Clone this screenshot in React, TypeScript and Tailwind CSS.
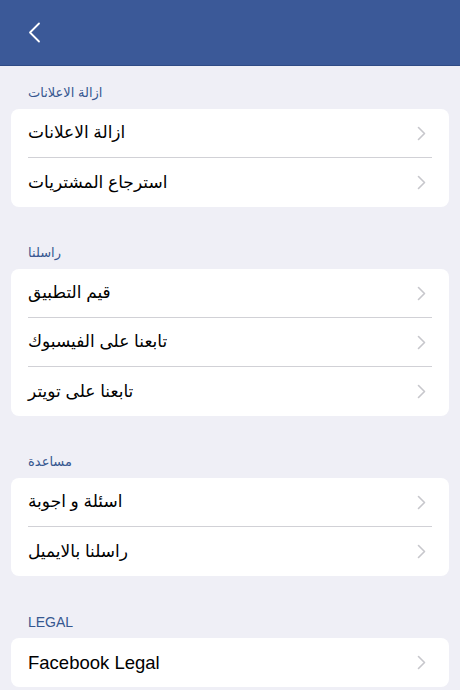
import React from "react";

const sections = [
  { title: "ازالة الاعلانات", items: ["ازالة الاعلانات", "استرجاع المشتريات"] },
  { title: "راسلنا", items: ["قيم التطبيق", "تابعنا على الفيسبوك", "تابعنا على تويتر"] },
  { title: "مساعدة", items: ["اسئلة و اجوبة", "راسلنا بالايميل"] },
  { title: "LEGAL", items: ["Facebook Legal"] },
];

const Chevron = () => (
  <svg width="9" height="15" viewBox="0 0 9 15" fill="none" stroke="#c7c7cc" strokeWidth="1.6" strokeLinecap="round" strokeLinejoin="round">
    <path d="M1.5 1.5 7.5 7.5 1.5 13.5" />
  </svg>
);

const App = () => {
  return (
    <div className="w-[460px] h-[690px] overflow-hidden bg-[#efeff6] font-['Liberation_Sans','DejaVu_Sans',sans-serif]">
      <div className="h-[66px] bg-[#3b5998] border-b border-[#2f4b85] flex items-center pl-[28px]">
        <svg width="13" height="21" viewBox="0 0 13 21" fill="none" stroke="white" strokeWidth="1.8" strokeLinecap="round" strokeLinejoin="round">
          <path d="M11 1.5 2 10.5 11 19.5" />
        </svg>
      </div>
      {sections.map((s, i) => (
        <div key={s.title} className={i === 0 ? "pt-[19px]" : "pt-[38px]"}>
          <div className={"px-[28px] pb-[8px] leading-[16px] text-[#365790] " + (i === 3 ? "text-[14px]" : "text-[13px]")}>{s.title}</div>
          <div className="mx-[11px] bg-white rounded-[8px] px-[17px]">
            {s.items.map((it, j) => (
              <div
                key={it}
                className={"h-[49px] flex items-center justify-between pr-[6px] " + (j < s.items.length - 1 ? "border-b border-[#d1d1d6]" : "")}
              >
                <span className={"text-black " + (i === 3 ? "text-[18.5px]" : "text-[17px]")}>{it}</span>
                <Chevron />
              </div>
            ))}
          </div>
        </div>
      ))}
    </div>
  );
};

export default App;
